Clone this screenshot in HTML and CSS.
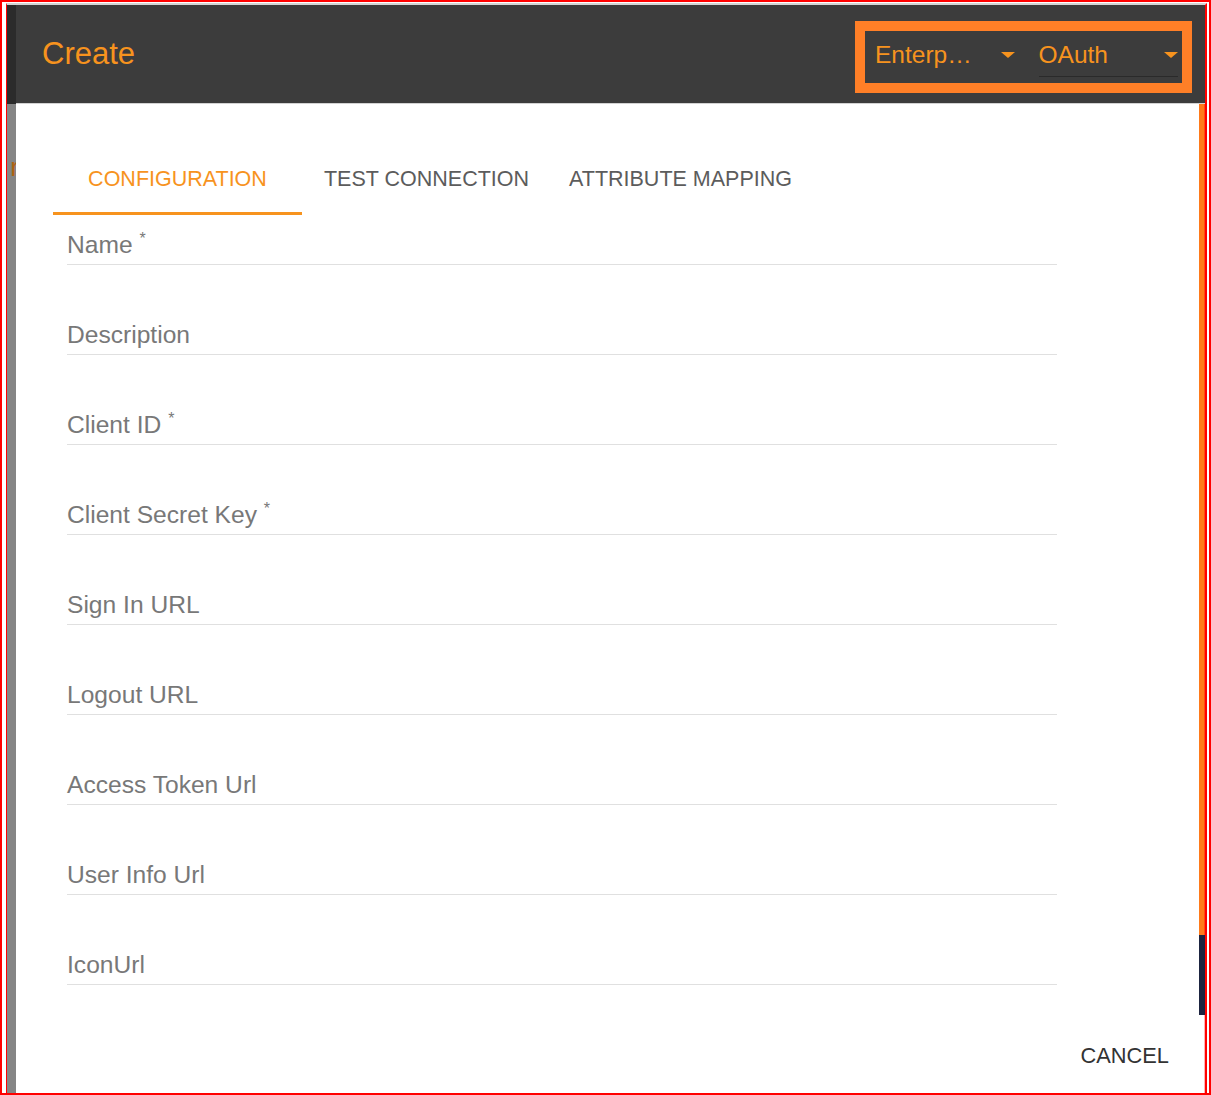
FILE: index.html
```html
<!DOCTYPE html>
<html lang="en">
<head>
  <meta charset="UTF-8">
  <meta name="viewport" content="width=device-width, initial-scale=1.0">
  <title>Create Identity Provider</title>
  <link rel="stylesheet" href="styles.css">
</head>
<body>
  <div class="shot">
    <div class="screen">
      <div class="backdrop">
        <div class="backdrop-top"></div>
        <div class="backdrop-page"><span class="backdrop-text">r</span></div>
      </div>

      <section class="dialog" role="dialog" aria-labelledby="dialog-title">
        <header class="dialog-header">
          <h1 class="dialog-title" id="dialog-title">Create</h1>
          <div class="picker-group">
            <div class="picker">
              <span class="picker-value">Enterp…</span>
              <span class="caret"></span>
            </div>
            <div class="picker picker--underlined">
              <span class="picker-value">OAuth</span>
              <span class="caret"></span>
            </div>
          </div>
        </header>

        <div class="dialog-scroll">
          <div class="dialog-content">
            <nav class="tabs">
              <button class="tab tab--active">Configuration</button>
              <button class="tab">Test Connection</button>
              <button class="tab tab--wide">Attribute Mapping</button>
            </nav>

            <form class="fields">
              <label class="field"><span class="field-label">Name <sup>*</sup></span></label>
              <label class="field"><span class="field-label">Description</span></label>
              <label class="field"><span class="field-label">Client ID <sup>*</sup></span></label>
              <label class="field"><span class="field-label">Client Secret Key <sup>*</sup></span></label>
              <label class="field"><span class="field-label">Sign In URL</span></label>
              <label class="field"><span class="field-label">Logout URL</span></label>
              <label class="field"><span class="field-label">Access Token Url</span></label>
              <label class="field"><span class="field-label">User Info Url</span></label>
              <label class="field"><span class="field-label">IconUrl</span></label>
            </form>
          </div>
          <div class="scrollbar">
            <div class="scrollbar-thumb"></div>
            <div class="scrollbar-track"></div>
          </div>
        </div>

        <footer class="dialog-actions">
          <button class="text-button">Cancel</button>
        </footer>
      </section>
    </div>
  </div>
</body>
</html>
```

FILE: styles.css
```css
*, *::before, *::after {
  box-sizing: border-box;
  margin: 0;
  padding: 0;
}

:root {
  --orange: #f7931e;
  --highlight: #ff7f27;
  --header-bg: #3c3c3c;
  --label: #787878;
  --tab-text: #5c5c5c;
  --line: #e0e0e0;
}

body {
  font-family: "Liberation Sans", Arial, sans-serif;
  background: #fff;
  width: 1211px;
  height: 1095px;
  overflow: hidden;
}

/* Screenshot frame */
.shot {
  width: 1211px;
  height: 1095px;
  border: 2px solid #f00;
  padding: 1px 2px 0 4px;
  background: #fff;
}

.screen {
  display: flex;
  height: 100%;
  border-left: 1px solid #f00;
  border-right: 2px solid #f00;
  border-top: 2px solid #d4d4d4;
}

/* Page behind the dialog */
.backdrop {
  width: 9px;
  display: flex;
  flex-direction: column;
}

.backdrop-top {
  height: 99px;
  background: #2b2b2b;
}

.backdrop-page {
  flex: 1;
  background: #858585;
  overflow: hidden;
  display: flex;
  justify-content: flex-end;
  padding-top: 50px;
}

.backdrop-text {
  font-size: 26px;
  line-height: 26px;
  color: #b0620f;
  margin-right: -3px;
}

/* Dialog */
.dialog {
  flex: 1;
  display: flex;
  flex-direction: column;
  background: #fff;
}

.dialog-header {
  height: 99px;
  background: var(--header-bg);
  border-bottom: 1px solid #d2d2d2;
  display: flex;
  align-items: center;
  justify-content: space-between;
  padding: 0 13px 0 26px;
}

.dialog-title {
  font-size: 31px;
  font-weight: 400;
  color: var(--orange);
}

.picker-group {
  display: flex;
  gap: 24px;
  width: 337px;
  height: 72px;
  margin-top: 6px;
  border: 10px solid var(--highlight);
  padding: 0 4px 6px 10px;
}

.picker {
  width: 140px;
  display: flex;
  align-items: center;
  padding-top: 2px;
  border-bottom: 1px solid transparent;
}

.picker--underlined {
  border-bottom-color: #2a2a2a;
}

.picker-value {
  font-size: 24.5px;
  color: var(--orange);
}

.caret {
  margin-left: auto;
  width: 0;
  height: 0;
  border-left: 7px solid transparent;
  border-right: 7px solid transparent;
  border-top: 6px solid var(--orange);
}

/* Scrollable body */
.dialog-scroll {
  height: 911px;
  display: flex;
}

.dialog-content {
  flex: 1;
  padding: 36px 0 0 37px;
}

.tabs {
  display: flex;
}

.tab {
  width: 249px;
  height: 75px;
  padding-top: 6px;
  font-family: inherit;
  font-size: 21.5px;
  text-transform: uppercase;
  color: var(--tab-text);
  background: none;
  border: 0;
  border-bottom: 3px solid transparent;
  cursor: pointer;
}

.tab--wide {
  width: 259px;
}

.tab--active {
  color: var(--orange);
  border-bottom-color: var(--orange);
}

.fields {
  display: flex;
  flex-direction: column;
  gap: 40px;
  margin-left: 14px;
  width: 990px;
}

.field {
  display: block;
  height: 50px;
  padding-top: 16px;
  border-bottom: 1px solid var(--line);
}

.field-label {
  font-size: 24.6px;
  line-height: 28px;
  color: var(--label);
}

.field-label sup {
  font-size: 16px;
  vertical-align: 9px;
  line-height: 0;
}

.scrollbar {
  width: 6px;
  display: flex;
  flex-direction: column;
}

.scrollbar-thumb {
  height: 831px;
  background: #ff7a1a;
  border-right: 1px solid #ff4a10;
}

.scrollbar-track {
  height: 80px;
  background: #1d2440;
}

/* Actions */
.dialog-actions {
  flex: 1;
  display: flex;
  justify-content: flex-end;
  align-items: flex-start;
  padding: 29px 35px 0 0;
  border-right: 1px solid #ffb3b3;
}

.text-button {
  font-family: inherit;
  font-size: 21.8px;
  line-height: 24px;
  text-transform: uppercase;
  color: #333;
  background: none;
  border: 0;
  cursor: pointer;
}
```
